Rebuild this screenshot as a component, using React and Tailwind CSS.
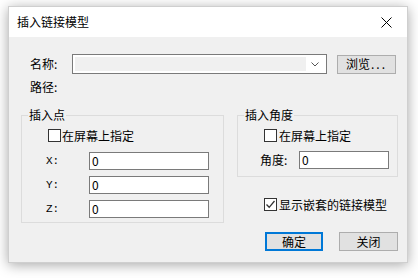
import React from "react";

const font = { fontFamily: '"Noto Sans CJK SC", "Noto Sans", sans-serif' };

function Box({ checked }) {
  return (
    <span className="w-[13px] h-[13px] border border-[#333333] bg-white flex items-center justify-center shrink-0">
      {checked && (
        <svg width="11" height="11" viewBox="0 0 11 11">
          <path d="M1.5 5.5 L4.2 8.3 L9.5 2" fill="none" stroke="#333" strokeWidth="1.3" />
        </svg>
      )}
    </span>
  );
}

function Input({ w }) {
  return (
    <div className={`${w} h-[18px] border border-[#7a7a7a] bg-white flex items-center pl-[2px] text-[12px] leading-none`}>
      0
    </div>
  );
}

function Group({ title, className, children }) {
  return (
    <div className={`relative border border-[#dcdcdc] ${className}`}>
      <span className="absolute left-[6px] top-[-9px] px-[1px] bg-[#f0f0f0] text-[12px] leading-[16px]">
        {title}
      </span>
      {children}
    </div>
  );
}

export default function App() {
  return (
    <div className="w-[418px] h-[278px] bg-white pt-[6px] pl-[8px] text-black" style={font}>
      <div className="w-[400px] h-[257px] flex flex-col shadow-[0_2px_12px_rgba(0,0,0,0.35)] border border-[#cfcfcf]">
        <div className="h-[30px] bg-white flex items-center justify-between pl-[8px] pr-[15px]">
          <span className="text-[12px] leading-none">插入链接模型</span>
          <svg width="11" height="11" viewBox="0 0 11 11">
            <path d="M0.5 0.5 L10.5 10.5 M10.5 0.5 L0.5 10.5" stroke="#000" strokeWidth="1" />
          </svg>
        </div>
        <div className="flex-1 bg-[#f0f0f0] pt-[17px] pl-[12px] text-[12px]">
          <div className="flex items-center h-[20px]">
            <span className="w-[42px] ml-[9px] leading-none">名称:</span>
            <div className="w-[255px] h-[20px] border border-[#7a7a7a] bg-white p-[2px] flex">
              <div className="flex-1 bg-[#f0f0f0]"></div>
              <div className="w-[18px] flex items-center justify-center">
                <svg width="8" height="5" viewBox="0 0 8 5">
                  <path d="M0.5 0.5 L4 4 L7.5 0.5" fill="none" stroke="#555" strokeWidth="1" />
                </svg>
              </div>
            </div>
            <div className="ml-[10px] w-[59px] h-[19px] border border-[#adadad] bg-[#e1e1e1] flex items-center justify-center leading-none">
              浏览<span className="tracking-[2px] ml-[1px]">...</span>
            </div>
          </div>
          <div className="mt-[6px] ml-[9px] h-[14px] leading-[14px]">路径:</div>
          <div className="flex mt-[21px] gap-[13px]">
            <Group title="插入点" className="w-[203px] h-[108px] pt-[13px] pl-[24px]">
              <div className="flex items-center h-[13px] ml-[2px] gap-[1px]">
                <Box />
                <span className="leading-none">在屏幕上指定</span>
              </div>
              <div className="flex flex-col gap-[6px] mt-[10px]">
                {["X", "Y", "Z"].map((l) => (
                  <div key={l} className="flex items-center">
                    <span
                      className="w-[43px] text-[11px] leading-none"
                      style={{ fontFamily: '"Liberation Mono", monospace' }}
                    >
                      {l}:
                    </span>
                    <Input w="w-[120px]" />
                  </div>
                ))}
              </div>
            </Group>
            <div className="flex flex-col w-[161px]">
              <Group title="插入角度" className="w-[161px] h-[62px] pt-[13px] pl-[22px]">
                <div className="flex items-center h-[13px] ml-[4px] gap-[2px]">
                  <Box />
                  <span className="leading-none">在屏幕上指定</span>
                </div>
                <div className="flex items-center mt-[9px]">
                  <span className="w-[39px] leading-none">角度:</span>
                  <Input w="w-[90px]" />
                </div>
              </Group>
              <div className="flex items-center h-[13px] mt-[21px] ml-[27px] gap-[2px]">
                <Box checked />
                <span className="leading-none">显示嵌套的链接模型</span>
              </div>
              <div className="flex justify-end gap-[16px] mt-[21px]">
                <div className="w-[58px] h-[19px] border-2 border-[#0078d7] bg-[#e1e1e1] flex items-center justify-center leading-none">
                  确定
                </div>
                <div className="w-[59px] h-[19px] border border-[#adadad] bg-[#e1e1e1] flex items-center justify-center leading-none">
                  关闭
                </div>
              </div>
            </div>
          </div>
        </div>
      </div>
    </div>
  );
}
